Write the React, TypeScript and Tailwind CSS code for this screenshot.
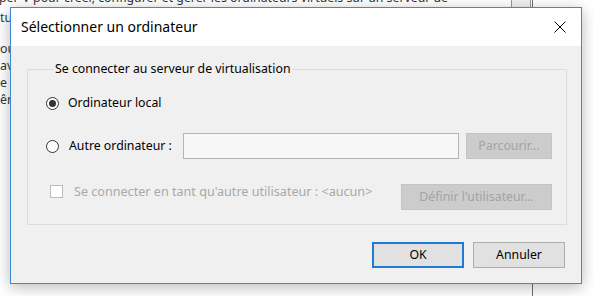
import React from "react";

function Radio({ checked }: { checked?: boolean }) {
  return (
    <span className="flex h-[13px] w-[13px] shrink-0 items-center justify-center rounded-full border border-[#333] bg-white">
      {checked && <span className="h-[7px] w-[7px] rounded-full bg-[#333]" />}
    </span>
  );
}

export default function App() {
  return (
    <div className="relative h-[296px] w-[593px] overflow-hidden bg-white font-['Noto_Sans',sans-serif] text-[12.3px] text-black">
      {/* background window */}
      <div className="flex h-full">
        <div className="flex w-[532px] flex-col text-[#333]">
          <div className="flex h-[7px] overflow-hidden">
            <div className="w-[512px] overflow-hidden whitespace-nowrap leading-[16px] -mt-[10px] -ml-[1px]">
              per-V pour créer, configurer et gérer les ordinateurs virtuels sur un serveur de
            </div>
            <div className="w-[20px] border-x border-[#9a9a9a] bg-[#f2f2f2]" />
          </div>
          <div className="mt-[2px] leading-[17px]">tu</div>
          <div className="mt-[14px] leading-[17px]">ou</div>
          <div className="leading-[17px]">av</div>
          <div className="leading-[17px]">e c</div>
          <div className="leading-[17px]">ên</div>
        </div>
        <div className="w-px bg-[#6e6e6e]" />
        <div className="flex-1" />
      </div>

      {/* dialog */}
      <div className="absolute left-[10px] top-[7px] flex h-[277px] w-[572px] flex-col border border-[#3a8ad8] bg-[#f0f0f0] shadow-[0_3px_14px_rgba(0,0,0,0.28)]">
        <div className="flex h-[38px] shrink-0 items-center justify-between bg-white pl-[10px] pr-[15px]">
          <span className="text-[14px] leading-[20px] text-black">Sélectionner un ordinateur</span>
          <svg width="12" height="12" viewBox="0 0 12 12">
            <path d="M0.5 0.5 L11.5 11.5 M11.5 0.5 L0.5 11.5" stroke="#000" strokeWidth="1" />
          </svg>
        </div>

        <div className="flex flex-1 flex-col">
          <fieldset className="mx-[16px] mt-[15px] mr-[14px] border border-[#dcdcdc] pl-[18px] pr-[13px] pb-[14px]">
            <legend className="ml-[8px] px-[1px] leading-[16px] text-black">
              Se connecter au serveur de virtualisation
            </legend>
            <div className="mt-[16px] flex h-[20px] items-center">
              <Radio checked />
              <span className="ml-[9px]">Ordinateur local</span>
            </div>
            <div className="mt-[20px] flex h-[26px] items-center">
              <div className="flex w-[137px] items-center">
                <Radio />
                <span className="ml-[10px]">Autre ordinateur :</span>
              </div>
              <div className="h-[26px] w-[276px] border border-[#b4b4b4] bg-[#f7f7f7]" />
              <div className="ml-[7px] flex h-[26px] w-[86px] items-center justify-center border border-[#c4c4c4] bg-[#cccccc] text-[#a3a3a3]">
                Parcourir...
              </div>
            </div>
            <div className="mt-[25px] flex h-[26px] items-start">
              <div className="ml-[4px] flex w-[351px] items-center pt-[1px]">
                <span className="h-[13px] w-[13px] shrink-0 border border-[#bcbcbc] bg-white" />
                <span className="ml-[11px] whitespace-nowrap text-[12.6px] leading-[13px] text-[#a8a8a8]">
                  Se connecter en tant qu'autre utilisateur : &lt;aucun&gt;
                </span>
              </div>
              <div className="flex h-[26px] w-[151px] items-center justify-center border border-[#c4c4c4] bg-[#cccccc] text-[#a3a3a3]">
                Définir l'utilisateur...
              </div>
            </div>
          </fieldset>

          <div className="mr-[16px] mt-[17px] flex justify-end gap-[9px]">
            <div className="flex h-[26px] w-[92px] items-center justify-center border-2 border-[#1f7ad3] bg-[#e1e1e1]">
              OK
            </div>
            <div className="flex h-[26px] w-[92px] items-center justify-center border border-[#adadad] bg-[#e1e1e1]">
              Annuler
            </div>
          </div>
        </div>
      </div>
    </div>
  );
}
